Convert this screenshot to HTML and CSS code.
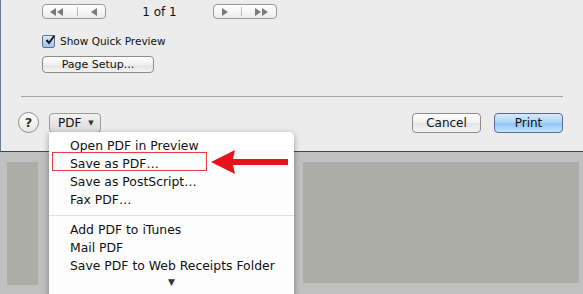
FILE: index.html
```html
<!DOCTYPE html>
<html>
  <head>
    <meta name="viewport" content="width=device-width, initial-scale=1" />
    <link rel="stylesheet" href="styles.css">
  </head>

  <body>
    <div class="window">
      <div class="dialog">
        <div class="nav-row">
          <div class="seg">
            <span class="seg-part">
              <svg width="14" height="8" viewBox="0 0 14 8"><path d="M0 4 L6 0 L6 8 Z M7 4 L13 0 L13 8 Z" fill="#7a7a7a"/></svg>
            </span>
            <span class="seg-div"></span>
            <span class="seg-part">
              <svg width="7" height="8" viewBox="0 0 7 8"><path d="M0 4 L6 0 L6 8 Z" fill="#7a7a7a"/></svg>
            </span>
          </div>
          <div class="page-count">1 of 1</div>
          <div class="seg">
            <span class="seg-part">
              <svg width="7" height="8" viewBox="0 0 7 8"><path d="M1 0 L7 4 L1 8 Z" fill="#7a7a7a"/></svg>
            </span>
            <span class="seg-div"></span>
            <span class="seg-part">
              <svg width="14" height="8" viewBox="0 0 14 8"><path d="M0 0 L6 4 L0 8 Z M7 0 L13 4 L7 8 Z" fill="#7a7a7a"/></svg>
            </span>
          </div>
        </div>

        <label class="check-row">
          <span class="checkbox">
            <svg width="12" height="12" viewBox="0 0 12 12"><path d="M2.5 6 L5 9 L10.5 1.5" stroke="#1a1a1a" stroke-width="2" fill="none"/></svg>
          </span>
          Show Quick Preview
        </label>

        <div class="setup-row">
          <button class="btn setup-btn">Page Setup...</button>
        </div>

        <div class="separator"></div>

        <div class="bottom-row">
          <span class="help">?</span>
          <button class="btn pdf-btn">PDF <span class="caret">&#9660;</span></button>
          <span class="spacer"></span>
          <button class="btn cancel-btn">Cancel</button>
          <button class="btn print-btn">Print</button>
        </div>
      </div>

      <div class="preview">
        <div class="sheet sheet-left"></div>
        <div class="sheet sheet-right"></div>
      </div>

      <div class="menu">
        <div class="menu-item">Open PDF in Preview</div>
        <div class="menu-item">Save as PDF…</div>
        <div class="menu-item">Save as PostScript…</div>
        <div class="menu-item">Fax PDF…</div>
        <div class="menu-sep"></div>
        <div class="menu-item">Add PDF to iTunes</div>
        <div class="menu-item">Mail PDF</div>
        <div class="menu-item">Save PDF to Web Receipts Folder</div>
        <div class="menu-more">&#9660;</div>
      </div>

      <div class="highlight"></div>
      <svg class="arrow" width="80" height="26" viewBox="0 0 80 26">
        <path d="M0 13 L24 1 L22 10 L77 10 L77 16 L22 16 L24 25 Z" fill="#e8121b"/>
      </svg>
    </div>
  </body>
</html>
```

FILE: styles.css
```css
body {
  margin: 0;
  font-family: "DejaVu Sans", sans-serif;
  font-size: 12px;
  color: #111;
}

.window {
  position: relative;
  width: 583px;
  height: 294px;
  overflow: hidden;
  background-color: #c0c0c0;
}

.dialog {
  height: 152px;
  box-sizing: border-box;
  background-color: #ececec;
  border-left: 1px solid #6b7a90;
  border-bottom: 1px solid #444;
  padding: 4px 20px 0 41px;
}

.nav-row {
  display: flex;
  align-items: center;
  height: 15px;
}

.seg {
  display: flex;
  align-items: center;
  height: 13px;
  width: 62px;
  border: 1px solid #9a9a9a;
  border-radius: 4px;
  background: linear-gradient(#ffffff, #ececec);
  justify-content: space-around;
}

.seg-part {
  display: flex;
  align-items: center;
}

.seg-div {
  width: 1px;
  height: 9px;
  background-color: #b8b8b8;
}

.page-count {
  width: 107px;
  text-align: center;
  font-size: 12px;
}

.check-row {
  display: flex;
  align-items: center;
  gap: 5px;
  margin-top: 15px;
  height: 14px;
  font-size: 10.5px;
}

.checkbox {
  display: flex;
  width: 11px;
  height: 11px;
  border: 1px solid #5d6f8e;
  border-radius: 2px;
  background: linear-gradient(#dbeaf8, #9fc3e7);
  position: relative;
}

.checkbox svg {
  position: absolute;
  left: 1px;
  top: -2px;
}

.setup-row {
  margin-top: 8px;
}

.btn {
  font-family: "DejaVu Sans", sans-serif;
  font-size: 12px;
  color: #111;
  border: 1px solid #8c8c8c;
  border-radius: 4px;
  background: linear-gradient(#ffffff, #f0f0f0 50%, #e4e4e4 51%, #f2f2f2);
  padding: 0;
  height: 18px;
}

.setup-btn {
  width: 112px;
  height: 17px;
  font-size: 11px;
}

.separator {
  margin: 23px 0 0 -21px;
  height: 1px;
  background-color: #a4a4a4;
}

.bottom-row {
  display: flex;
  align-items: center;
  margin: 15px 0 0 -24px;
  gap: 0;
}

.help {
  display: flex;
  justify-content: center;
  align-items: center;
  width: 19px;
  height: 19px;
  border: 1px solid #8c8c8c;
  border-radius: 50%;
  background: linear-gradient(#ffffff, #e6e6e6);
  font-weight: bold;
  font-size: 13px;
  color: #333;
  margin-right: 10px;
}

.pdf-btn {
  width: 52px;
  height: 20px;
  background: linear-gradient(#f2f2f2, #dadada);
  border-color: #9a9a9a;
  text-align: left;
  padding-left: 8px;
  font-size: 12px;
}

.caret {
  font-size: 7px;
  color: #333;
  margin-left: 3px;
  vertical-align: 2px;
}

.spacer {
  flex: 1;
}

.cancel-btn,
.print-btn {
  width: 69px;
  height: 20px;
}

.cancel-btn {
  margin-right: 13px;
}

.print-btn {
  border-color: #5c6a98;
  background: linear-gradient(#d7ebfb, #a9d4f7 50%, #8cc5f4 51%, #c3e4fc);
}

.preview {
  display: flex;
  justify-content: space-between;
  padding: 10px 4px 0 7px;
  height: 123px;
}

.sheet {
  background-color: #acada7;
}

.sheet-left {
  width: 31px;
  height: 123px;
}

.sheet-right {
  width: 276px;
  height: 121px;
}

.menu {
  position: absolute;
  left: 49px;
  top: 132px;
  width: 245px;
  height: 170px;
  background-color: rgba(255, 255, 255, 0.97);
  border-radius: 0 5px 5px 5px;
  box-shadow: 0 2px 6px rgba(0, 0, 0, 0.35);
  padding-top: 5px;
  box-sizing: border-box;
}

.menu-item {
  height: 18px;
  line-height: 18px;
  padding-left: 21px;
  font-size: 12.4px;
  color: #111;
}

.menu-sep {
  height: 1px;
  background-color: #e0e0e0;
  margin: 6px 0 5px 0;
}

.menu-more {
  text-align: center;
  font-size: 9px;
  color: #333;
  line-height: 14px;
}

.highlight {
  position: absolute;
  left: 52px;
  top: 152px;
  width: 153px;
  height: 17px;
  border: 1px solid #ee3b3b;
}

.arrow {
  position: absolute;
  left: 211px;
  top: 149px;
}
```
